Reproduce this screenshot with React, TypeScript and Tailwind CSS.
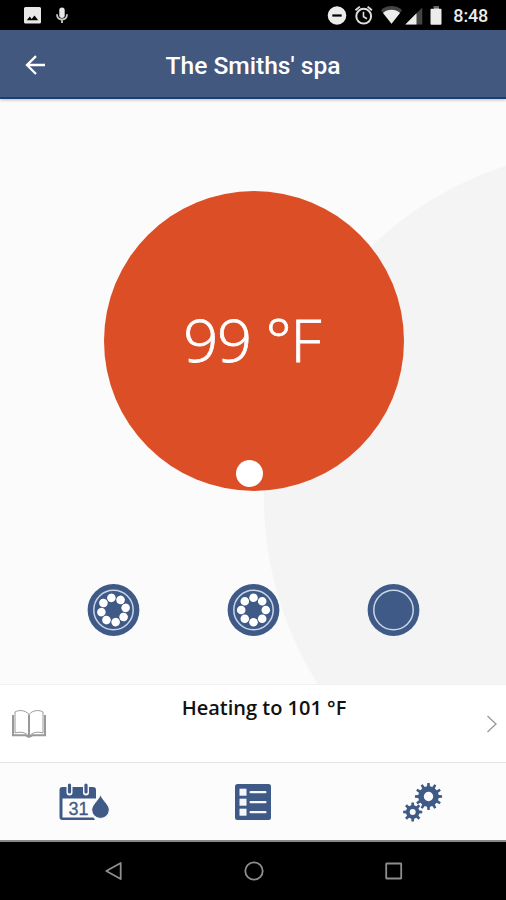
import React from 'react';

const JETS = [
  { id: 'jet-1', running: true, rotation: -10 },
  { id: 'jet-2', running: true, rotation: 0 },
  { id: 'jet-3', running: false, rotation: 0 },
];

const BLUE = '#3f5a87';

const gearPath = (cx: number, cy: number, outer: number, inner: number, teeth: number) => {
  const points: string[] = [];
  const step = (Math.PI * 2) / teeth;
  const add = (r: number, a: number) => {
    points.push(`${(cx + r * Math.sin(a)).toFixed(2)} ${(cy - r * Math.cos(a)).toFixed(2)}`);
  };
  for (let i = 0; i < teeth; i++) {
    const a = i * step;
    add(inner, a - step * 0.27);
    add(outer, a - step * 0.17);
    add(outer, a + step * 0.17);
    add(inner, a + step * 0.27);
  }
  return `M${points.join('L')}Z`;
};

const holePath = (cx: number, cy: number, r: number) =>
  `M${cx - r} ${cy}a${r} ${r} 0 1 0 ${r * 2} 0a${r} ${r} 0 1 0 ${-r * 2} 0Z`;

const StatusBar: React.FC = () => (
  <div className="h-[30px] shrink-0 bg-black flex items-center justify-between pl-6 pr-[18px] text-[#ececec]">
    <svg width="46" height="30" viewBox="0 0 46 30" fill="#e8e8e8">
      <path fillRule="evenodd" d="M1.500 7h14a1.500 1.500 0 0 1 1.500 1.500V22a1.500 1.500 0 0 1-1.500 1.500h-14A1.500 1.500 0 0 1 0 22V8.500A1.500 1.500 0 0 1 1.500 7ZM2.800 20.300h11.400l-3.700-4.900-2.800 3.500-1.900-2.300Z" />
      <rect x="35.300" y="7.500" width="5.400" height="10.500" rx="2.700" />
      <path d="M33 14.300c0 3.400 2.200 5.200 5 5.200s5-1.800 5-5.200M38 19.500v3.500" fill="none" stroke="#c8c8c8" strokeWidth="1.800" />
    </svg>
    <div className="flex items-center">
      <svg width="125" height="30" viewBox="0 0 125 30" fill="#ececec">
        <circle cx="15" cy="15.500" r="9.300" />
        <rect x="10.300" y="14.400" width="9.400" height="2.200" fill="#000" />
        <g fill="none" stroke="#dedede">
          <circle cx="41.700" cy="16.200" r="7.400" strokeWidth="2" />
          <path d="M41.500 11.800v4.900l3.500 2.100" strokeWidth="1.600" />
          <path d="M33.500 10.300l4.300-3.700M49.900 10.300l-4.300-3.700" strokeWidth="1.900" />
        </g>
        <path d="M59 10.200a15.500 15.500 0 0 1 21 0L69.500 23.800Z" fill="#444" />
        <path d="M61 13a13 13 0 0 1 17 0L69.500 23.800Z" />
        <path d="M100.300 7.500v17H83.300Z" fill="#444" />
        <path d="M94.500 13.300v11.200H83.300Z" />
        <path d="M112 7h5v1.800h1.500a1 1 0 0 1 1 1V23.800a1 1 0 0 1-1 1h-9a1 1 0 0 1-1-1V9.800a1 1 0 0 1 1-1H112Z" />
        <rect x="111.500" y="6" width="5.500" height="2.500" fill="#666" />
      </svg>
      <span className="ml-[6px] mt-[2px] text-[18px] leading-none font-medium tracking-[-0.200px]">8:48</span>
    </div>
  </div>
);

const Header: React.FC = () => (
  <header className="h-[69px] shrink-0 bg-[#42587e] border-b-2 border-[#173f70] shadow-[0_1px_3px_rgba(0,0,0,0.25)] z-10 grid grid-cols-[1fr_auto_1fr] items-center">
    <button aria-label="Back" className="pl-[25px] pt-[2px]">
      <svg width="21" height="20" viewBox="0 0 21 20" fill="none" stroke="#fff" strokeWidth="2.300">
        <path d="M11 1.100L2 10l9 9M2 10h18" />
      </svg>
    </button>
    <h1 className="text-white text-[24.600px] leading-8 font-medium pt-[4px]">The Smiths' spa</h1>
    <span />
  </header>
);

const JetButton: React.FC<{ running: boolean; rotation: number }> = ({ running, rotation }) => (
  <button aria-label="Jets" className="w-[52px] h-[52px]">
    <svg className="overflow-visible" width="52" height="52" viewBox="0 0 52 52">
      <circle cx="25.500" cy="26" r="25.900" fill={BLUE} />
      <circle cx="25.500" cy="26" r="19.700" fill="none" stroke="#c9d5e8" strokeWidth="1.500" />
      {running && (
        <g fill="#fff" transform={`translate(-0.5 0) rotate(${rotation} 26 26)`}>
          {[0, 45, 90, 135, 180, 225, 270, 315].map(a => (
            <circle key={a} cx="26" cy="13.700" r="4.300" transform={`rotate(${a} 26 26)`} />
          ))}
        </g>
      )}
    </svg>
  </button>
);

const Dial: React.FC = () => (
  <div className="relative w-[300px] h-[300px] rounded-full bg-[#dc4e26] flex items-center justify-center">
    <span className="font-['Open_Sans',sans-serif] font-light text-white text-[59px] leading-none tracking-[-1.200px] whitespace-pre scale-x-[1.04] pr-[4px] pb-[3px] [-webkit-text-stroke:0.800px_white]">99 °F</span>
    <span className="absolute left-[131.500px] top-[269px] w-[27px] h-[27px] rounded-full bg-white" />
  </div>
);

const StatusRow: React.FC = () => (
  <section className="h-[79px] shrink-0 bg-white border-t border-[#f0f0f0] border-b border-b-[#e4e4e4] grid grid-cols-[1fr_auto_1fr] items-center pl-[11px] pr-[8px]">
    <svg width="36" height="30" viewBox="0 0 36 30" fill="none" stroke="#999">
      <path d="M18 5.500C14 .5 7 1 4 3v21c5-1.500 11-1 14 3.500C21 23 27 22.500 32 24V3C29 1 22 .5 18 5.500Z" strokeWidth="1" />
      <path d="M18 5.500v22" strokeWidth="2" />
      <path d="M2 6v20.300h12.500l3.500 1.500 3.500-1.500H34V6" strokeWidth="2" />
    </svg>
    <p className="self-start pt-[9px] pl-[19px] font-['Open_Sans',sans-serif] font-semibold text-[20px] leading-7 text-[#111]">Heating to 101 °F</p>
    <svg className="justify-self-end" width="12" height="20" viewBox="0 0 12 20" fill="none" stroke="#999" strokeWidth="1.300">
      <path d="M1.500 2l8.500 8-8.500 8" />
    </svg>
  </section>
);

const CalendarIcon: React.FC = () => (
  <svg width="52" height="38" viewBox="0 0 52 38">
    <rect x="1.200" y="5.200" width="34.600" height="31.600" rx="2.500" fill="#fcfcfc" />
    <path d="M37 16V7a3 3 0 0 0-3-3H3.500a3 3 0 0 0-3 3v27a3 3 0 0 0 3 3H36l-1.500-2.500h-31V15.500H37Z" fill={BLUE} />
    <g strokeLinecap="round">
      <path d="M10.500 2.500v7M27 2.500v7" stroke="#fcfcfc" strokeWidth="6" />
      <path d="M10.500 2v7M27 2v7" stroke={BLUE} strokeWidth="3.200" />
    </g>
    <text x="19.500" y="31.500" textAnchor="middle" fontFamily="Liberation Sans, sans-serif" fontSize="18" fill={BLUE} stroke={BLUE} strokeWidth="0.300">31</text>
    <path d="M41.500 11.500c2 6 8.800 10 8.800 15.400a8.800 8.500 0 0 1-17.600 0c0-5.400 6.800-9.400 8.800-15.400Z" fill={BLUE} stroke="#fcfcfc" strokeWidth="1" />
  </svg>
);

const ListIcon: React.FC = () => (
  <svg width="36" height="36" viewBox="0 0 36 36">
    <rect width="36" height="36" rx="2.500" fill={BLUE} />
    {[4.7, 14.7, 24.7].map(y => (
      <g key={y} fill="#f5f7fa">
        <rect x="4.500" y={y} width="7" height="7" />
        <rect x="14.500" y={y + 2.400} width="17" height="2.200" rx="1" />
      </g>
    ))}
  </svg>
);

const GearsIcon: React.FC = () => (
  <svg width="40" height="40" viewBox="0 0 40 40" fill={BLUE} fillRule="evenodd">
    <path d={gearPath(25.5, 14.5, 13.6, 10.3, 12) + holePath(25.5, 14.5, 4.7)} />
    <path d={gearPath(9.7, 30, 9.6, 6.8, 8) + holePath(9.7, 30, 3)} />
  </svg>
);

const TabBar: React.FC = () => (
  <nav className="h-[79px] shrink-0 bg-[#fcfcfc] border-b-2 border-[#888] grid grid-cols-3 items-center justify-items-center pl-[1px]">
    <button aria-label="Schedule"><CalendarIcon /></button>
    <button aria-label="List"><ListIcon /></button>
    <button aria-label="Settings" className="pl-[2px]"><GearsIcon /></button>
  </nav>
);

const SystemNav: React.FC = () => (
  <div className="h-[58px] shrink-0 bg-black flex justify-between items-center pl-[104px] pr-[102px]">
    <svg width="20" height="20" viewBox="0 0 20 20" fill="none" stroke="#8e8e8e" strokeWidth="1.800">
      <path d="M16.700 2v16L2.300 10Z" strokeLinejoin="round" />
    </svg>
    <svg width="20" height="20" viewBox="0 0 20 20" fill="none" stroke="#8e8e8e" strokeWidth="1.800">
      <circle cx="10" cy="10" r="8.700" />
    </svg>
    <svg width="20" height="20" viewBox="0 0 20 20" fill="none" stroke="#8e8e8e" strokeWidth="1.800">
      <rect x="2.200" y="2.500" width="15" height="15" rx="0.500" />
    </svg>
  </div>
);

export default function App() {
  return (
    <div className="w-[506px] h-[900px] flex flex-col overflow-hidden font-[Roboto,sans-serif] bg-[#fcfcfc]">
      <StatusBar />
      <Header />
      <main className="relative flex-1 overflow-hidden bg-[#fbfbfb]">
        {/* oversized backdrop circle behind the dial */}
        <div className="absolute left-[264px] top-[50px] w-[698px] h-[698px] rounded-full bg-[#f4f4f4]" />
        <div className="relative flex flex-col items-center pt-[92px] pl-[2px]">
          <Dial />
          <div className="flex gap-[88px] mt-[93px]">
            {JETS.map(jet => (
              <JetButton key={jet.id} running={jet.running} rotation={jet.rotation} />
            ))}
          </div>
        </div>
      </main>
      <StatusRow />
      <TabBar />
      <SystemNav />
    </div>
  );
}
